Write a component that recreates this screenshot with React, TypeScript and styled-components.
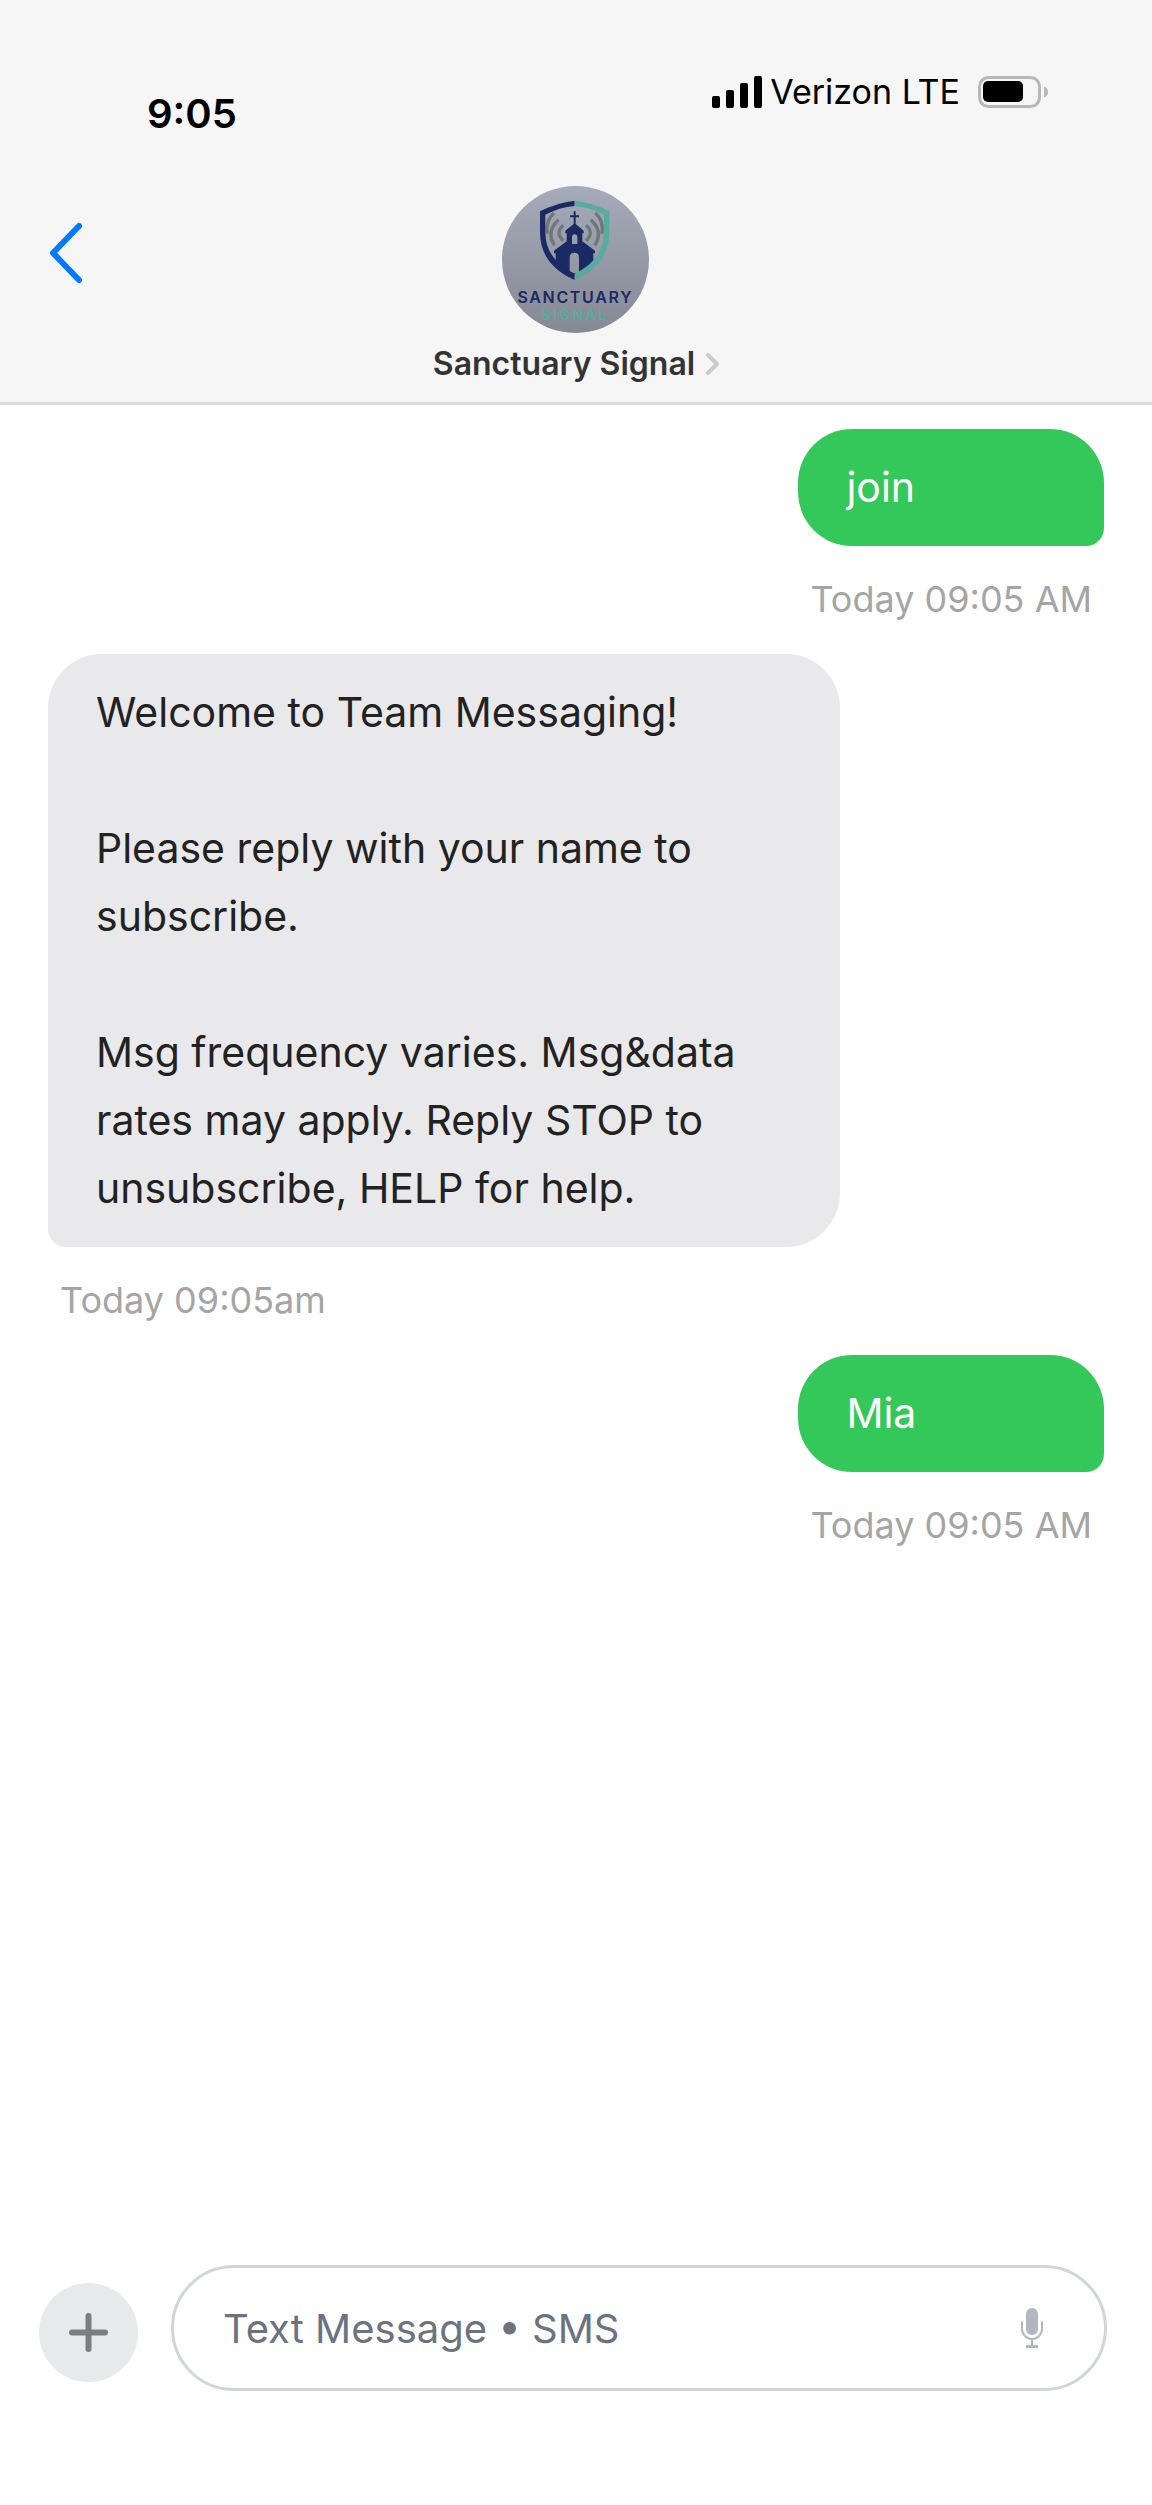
import React from "react";
import styled, { createGlobalStyle } from "styled-components";

const GlobalStyle = createGlobalStyle`
  *, *::before, *::after { box-sizing: border-box; }
  body {
    margin: 0;
    background: #ffffff;
    font-family: Inter, "Liberation Sans", sans-serif;
  }
  button, input { font: inherit; }
`;

const Screen = styled.div`
  min-height: 100vh;
  display: flex;
  flex-direction: column;
`;

const Header = styled.header`
  background: #f6f6f6;
  border-bottom: 3px solid #dadada;
`;

const StatusBar = styled.div`
  display: flex;
  justify-content: space-between;
  align-items: flex-start;
  padding: 71px 104px 0 147px;
  color: #000000;
`;

const Clock = styled.time`
  margin-top: 16px;
  font-size: 40px;
  line-height: 54px;
  font-weight: 600;
`;

const Carrier = styled.div`
  display: flex;
  align-items: center;
  gap: 8px;
  font-size: 34px;
  line-height: 42px;
`;

const BatterySlot = styled.span`
  display: flex;
  margin-left: 10px;
`;

const Nav = styled.nav`
  display: grid;
  grid-template-columns: 1fr auto 1fr;
  align-items: start;
  padding: 45px 48px 20px;
`;

const IconButton = styled.button`
  display: flex;
  align-items: center;
  justify-content: center;
  padding: 0;
  border: 0;
  background: none;
  cursor: pointer;
`;

const BackButton = styled(IconButton)`
  justify-self: start;
  height: 134px;
`;

const Contact = styled.div`
  display: flex;
  flex-direction: column;
  align-items: center;
  gap: 13px;
`;

const ContactName = styled.a`
  display: flex;
  align-items: center;
  gap: 10px;
  color: #333333;
  font-size: 32px;
  line-height: 36px;
  font-weight: 600;
  text-decoration: none;
`;

const Thread = styled.main`
  flex: 1;
  display: flex;
  flex-direction: column;
  gap: 28px;
  padding: 24px 48px;
`;

const Message = styled.article<{ $sent?: boolean }>`
  align-self: ${(p) => (p.$sent ? "flex-end" : "flex-start")};
  max-width: 75%;
`;

const Bubble = styled.p<{ $sent?: boolean }>`
  margin: 0;
  padding: 24px 48px 25px;
  border-radius: ${(p) => (p.$sent ? "54px 54px 18px 54px" : "54px 54px 54px 18px")};
  background: ${(p) => (p.$sent ? "#34c759" : "#e9e9eb")};
  color: ${(p) => (p.$sent ? "#ffffff" : "#222222")};
  font-size: 41px;
  line-height: 68px;
  white-space: pre-line;
`;

const Stamp = styled.time<{ $sent?: boolean }>`
  display: block;
  margin-top: 26px;
  padding: 0 12px;
  color: #a5a5a5;
  font-size: 36px;
  line-height: 54px;
  text-align: ${(p) => (p.$sent ? "right" : "left")};
`;

const Composer = styled.form`
  display: flex;
  align-items: flex-end;
  gap: 33px;
  padding: 0 45px 114px 39px;
`;

const AddButton = styled(IconButton)`
  flex: none;
  width: 99px;
  height: 99px;
  margin-bottom: 9px;
  border-radius: 50%;
  background: #e8e9eb;
`;

const Field = styled.div`
  flex: 1;
  display: flex;
  align-items: center;
  height: 126px;
  padding: 0 61px 0 49px;
  border: 3px solid #d1d5db;
  border-radius: 63px;
`;

const TextInput = styled.input`
  flex: 1;
  min-width: 0;
  height: 100%;
  padding: 0;
  border: 0;
  outline: 0;
  background: transparent;
  color: #222222;
  font-size: 40px;
  &::placeholder {
    color: #6b7280;
    opacity: 1;
  }
`;

const SignalBars = () => (
  <svg width="50" height="32" viewBox="0 0 50 32" aria-hidden="true">
    <rect x="0" y="20" width="8" height="12" rx="2" />
    <rect x="14" y="14" width="8" height="18" rx="2" />
    <rect x="28" y="7" width="8" height="25" rx="2" />
    <rect x="42" y="0" width="8" height="32" rx="2" />
  </svg>
);

const Battery = () => (
  <svg width="70" height="32" viewBox="0 0 70 32" aria-hidden="true">
    <rect x="1.5" y="1.5" width="60" height="29" rx="9" fill="none" stroke="#b8b8b8" strokeWidth="3" />
    <rect x="5" y="5" width="40" height="21" rx="5" />
    <path d="M66 10.5c5.500 2 5.500 9 0 11z" fill="#b8b8b8" />
  </svg>
);

const Logo = () => (
  <svg width="147" height="147" viewBox="72 48 441 441" role="img" aria-label="Sanctuary Signal logo">
    <defs>
      <linearGradient id="avatar" x1="0" y1="0" x2="0" y2="1">
        <stop offset="0" stopColor="#a5abb9" />
        <stop offset="1" stopColor="#858994" />
      </linearGradient>
    </defs>
    <circle cx="292.500" cy="268.500" r="220.500" fill="url(#avatar)" />
    <g fill="none" stroke="#70767a" strokeWidth="10">
      <path d="M256 166q-26 22 0 46M242 149q-40 36-12 77M228 129q-26 22-20 62" />
      <path d="M324 166q26 22 0 46M338 149q40 36 12 77M352 129q26 22 20 62" />
    </g>
    <path
      fill="#1b2a63"
      fillRule="evenodd"
      d="M287 124h6v12h10v6h-10v20l24 20v8h-4v24l38 28v8h-5v22q-22 30-56 46q-36-16-57-46v-22h-5v-8l38-28v-24h-4v-8l25-20v-20h-11v-6h11zM282 222h16v-20q0-9-8-9t-8 9zM275 310h28v-47q0-15-14-15t-14 15z"
    />
    <path fill="#1b2a63" d="M290 92q-54 6-104 32v62q0 98 104 144v-19q-88-42-88-125v-52q42-22 88-26z" />
    <path fill="#57ab9f" d="M290 92q54 6 104 32v62q0 98-104 144v-19q88-42 88-125v-52q-42-22-88-26z" />
    <g fontFamily="Inter, sans-serif" fontWeight="600" textAnchor="middle">
      <text x="292" y="398" fontSize="48" letterSpacing="5" fill="#1b2a63">SANCTUARY</text>
      <text x="292" y="449" fontSize="43" letterSpacing="7" fill="#57ab9f">SIGNAL</text>
    </g>
  </svg>
);

const thread = [
  { sent: true, text: "join", stamp: "Today 09:05 AM" },
  {
    sent: false,
    text:
      "Welcome to Team Messaging!\n\nPlease reply with your name to subscribe.\n\nMsg frequency varies. Msg&data rates may apply. Reply STOP to unsubscribe, HELP for help.",
    stamp: "Today 09:05am",
  },
  { sent: true, text: "Mia", stamp: "Today 09:05 AM" },
];

export default function App() {
  return (
    <Screen>
      <GlobalStyle />
      <Header>
        <StatusBar>
          <Clock>9:05</Clock>
          <Carrier>
            <SignalBars />
            <span>Verizon LTE</span>
            <BatterySlot>
              <Battery />
            </BatterySlot>
          </Carrier>
        </StatusBar>
        <Nav>
          <BackButton type="button" aria-label="Back">
            <svg width="36" height="62" viewBox="0 0 36 62" fill="none" stroke="#007aff" strokeWidth="6" strokeLinecap="round" strokeLinejoin="round">
              <path d="M31 4L5 31l26 27" />
            </svg>
          </BackButton>
          <Contact>
            <Logo />
            <ContactName href="#contact">
              Sanctuary Signal
              <svg width="14" height="24" viewBox="0 0 14 24" fill="none" stroke="#cbcbcd" strokeWidth="4" strokeLinecap="round" strokeLinejoin="round" aria-hidden="true">
                <path d="M3 3l9 9l-9 9" />
              </svg>
            </ContactName>
          </Contact>
        </Nav>
      </Header>
      <Thread>
        {thread.map((m, i) => (
          <Message key={i} $sent={m.sent}>
            <Bubble $sent={m.sent}>{m.text}</Bubble>
            <Stamp $sent={m.sent}>{m.stamp}</Stamp>
          </Message>
        ))}
      </Thread>
      <Composer onSubmit={(e) => e.preventDefault()}>
        <AddButton type="button" aria-label="Add attachment">
          <svg width="39" height="39" viewBox="0 0 39 39" stroke="#7c7d82" strokeWidth="6" strokeLinecap="round">
            <path d="M3 19.500h33M19.500 3v33" />
          </svg>
        </AddButton>
        <Field>
          <TextInput type="text" aria-label="Text Message" placeholder="Text Message • SMS" />
          <IconButton type="button" aria-label="Dictate">
            <svg width="22" height="40" viewBox="0 0 22 40" fill="none" stroke="#b3b8c0" strokeWidth="2">
              <rect x="5" y="0" width="12" height="27" rx="6" fill="#b3b8c0" stroke="none" />
              <path d="M1 14v7a10 10 0 0 0 20 0v-7M11 31v7" strokeLinecap="round" />
              <path d="M5 38.500h12" strokeWidth="3" />
            </svg>
          </IconButton>
        </Field>
      </Composer>
    </Screen>
  );
}
